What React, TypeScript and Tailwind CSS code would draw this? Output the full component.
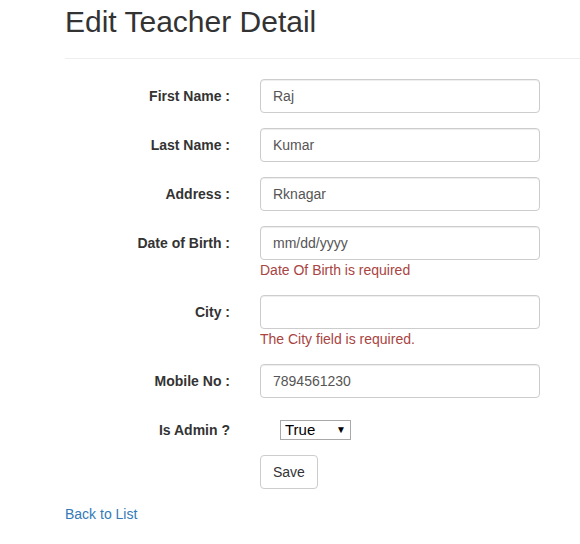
import React from 'react';

const inputCls =
  'block h-[34px] w-[280px] rounded-[4px] border border-[#ccc] bg-white px-3 py-1.5 text-[14px] leading-5 text-[#555] shadow-[inset_0_1px_1px_rgba(0,0,0,0.075)] outline-none';

function Row({
  label,
  children,
  error,
}: {
  label: string;
  children: React.ReactNode;
  error?: string;
}) {
  return (
    <div className="mb-[15px] flex">
      <label className="w-[165px] shrink-0 pt-[7px] text-right text-[14px] font-bold leading-5 text-[#333]">
        {label}
      </label>
      <div className="ml-[30px]">
        {children}
        {error && <span className="block text-[14px] leading-5 text-[#a94442]">{error}</span>}
      </div>
    </div>
  );
}

export default function App() {
  return (
    <div
      className="min-h-[544px] w-[580px] overflow-hidden bg-white text-[14px] leading-5 text-[#333]"
      style={{ fontFamily: '"Liberation Sans", Arial, sans-serif' }}
    >
      <div className="pl-[65px] pt-[5px]">
        <h2 className="text-[30px] font-normal leading-[33px] text-[#333]">Edit Teacher Detail</h2>
        <hr className="mt-5 mb-5 border-0 border-t border-[#eee]" />

        <form>
          <Row label="First Name :">
            <input className={inputCls} defaultValue="Raj" />
          </Row>
          <Row label="Last Name :">
            <input className={inputCls} defaultValue="Kumar" />
          </Row>
          <Row label="Address :">
            <input className={inputCls} defaultValue="Rknagar" />
          </Row>
          <Row label="Date of Birth :" error="Date Of Birth is required">
            <input className={inputCls} defaultValue="mm/dd/yyyy" />
          </Row>
          <Row label="City :" error="The City field is required.">
            <input className={inputCls} defaultValue="" />
          </Row>
          <Row label="Mobile No :">
            <input className={inputCls} defaultValue="7894561230" />
          </Row>
          <Row label="Is Admin ?">
            <div className="relative ml-5 mt-[7px] h-5 w-[71px]">
              <select className="h-5 w-[71px] appearance-none rounded-none border border-[#a9a9a9] bg-white pl-1 text-[15px] leading-[18px] text-black outline-none">
                <option>True</option>
                <option>False</option>
              </select>
              <span className="pointer-events-none absolute right-[5px] top-[3px] text-[10px] leading-[14px] text-black">
                ▼
              </span>
            </div>
          </Row>
          <div className="mb-[15px] flex">
            <div className="w-[165px] shrink-0" />
            <button
              type="button"
              className="ml-[30px] h-[34px] rounded-[4px] border border-[#ccc] bg-white px-3 py-1.5 text-[14px] leading-5 text-[#333]"
            >
              Save
            </button>
          </div>
        </form>

        <a href="#" className="text-[14px] leading-5 text-[#337ab7]">
          Back to List
        </a>
      </div>
    </div>
  );
}
